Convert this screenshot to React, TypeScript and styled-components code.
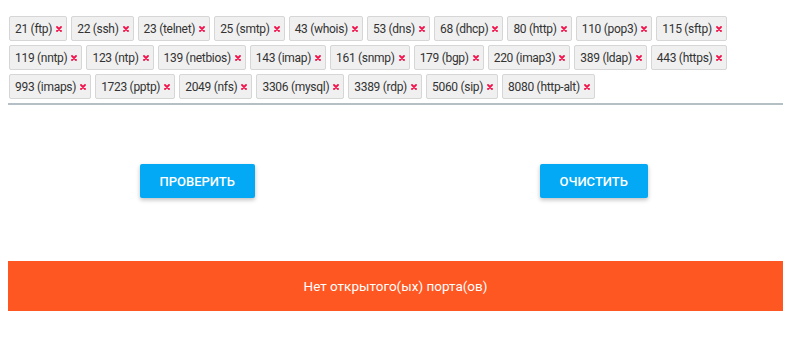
import React, { FC, useState } from "react";
import styled, { createGlobalStyle } from "styled-components";

const GlobalStyle = createGlobalStyle`
  body {
    margin: 8px;
    background: #ffffff;
    font-family: Roboto, "Liberation Sans", Arial, sans-serif;
  }
`;

const PORTS: [number, string][] = [
  [21, "ftp"],
  [22, "ssh"],
  [23, "telnet"],
  [25, "smtp"],
  [43, "whois"],
  [53, "dns"],
  [68, "dhcp"],
  [80, "http"],
  [110, "pop3"],
  [115, "sftp"],
  [119, "nntp"],
  [123, "ntp"],
  [139, "netbios"],
  [143, "imap"],
  [161, "snmp"],
  [179, "bgp"],
  [220, "imap3"],
  [389, "ldap"],
  [443, "https"],
  [993, "imaps"],
  [1723, "pptp"],
  [2049, "nfs"],
  [3306, "mysql"],
  [3389, "rdp"],
  [5060, "sip"],
  [8080, "http-alt"],
];

const Wrapper = styled.div`
  width: 775px;
`;

const TagBox = styled.div`
  display: flex;
  flex-wrap: wrap;
  gap: 4px;
  padding: 8px 0 4px 1px;
  border-bottom: 2px solid #b4c0c6;
`;

const Tag = styled.span`
  display: inline-flex;
  align-items: center;
  height: 25px;
  box-sizing: border-box;
  padding: 0 4px 0 5px;
  background: #f0f0f0;
  border: 1px solid #d6d6d6;
  border-radius: 2px;
  color: #333333;
  font-size: 12px;
  letter-spacing: -0.3px;
`;

const Remove = styled.svg`
  width: 6px;
  height: 6px;
  margin-left: 4px;
  color: #f0134d;
  cursor: pointer;
`;

const Actions = styled.div`
  display: grid;
  grid-template-columns: 1fr 1fr;
  column-gap: 18px;
  justify-items: center;
  padding-top: 59px;
  padding-bottom: 63px;
`;

const Button = styled.button`
  height: 34px;
  padding: 0 20px;
  border: none;
  border-radius: 2px;
  background: #03a9f4;
  color: #ffffff;
  font-family: Roboto, "Liberation Sans", Arial, sans-serif;
  font-size: 13px;
  font-weight: 500;
  text-transform: uppercase;
  box-shadow: 0 2px 4px rgba(0, 0, 0, 0.25);
  cursor: pointer;
`;

const Result = styled.div`
  height: 50px;
  display: flex;
  align-items: center;
  justify-content: center;
  background: #ff5722;
  color: #ffffff;
  font-size: 13.5px;
`;

const App: FC = () => {
  const [ports, setPorts] = useState(PORTS);

  return (
    <Wrapper>
      <GlobalStyle />
      <TagBox>
        {ports.map(([num, name]) => (
          <Tag key={num}>
            {num} ({name})
            <Remove
              viewBox="0 0 6 6"
              onClick={() => setPorts(ports.filter((p) => p[0] !== num))}
            >
              <path
                d="M1 1L5 5M5 1L1 5"
                stroke="currentColor"
                strokeWidth="1.8"
                strokeLinecap="round"
              />
            </Remove>
          </Tag>
        ))}
      </TagBox>
      <Actions>
        <Button>Проверить</Button>
        <Button onClick={() => setPorts([])}>Очистить</Button>
      </Actions>
      <Result>Нет открытого(ых) порта(ов)</Result>
    </Wrapper>
  );
};

export default App;
